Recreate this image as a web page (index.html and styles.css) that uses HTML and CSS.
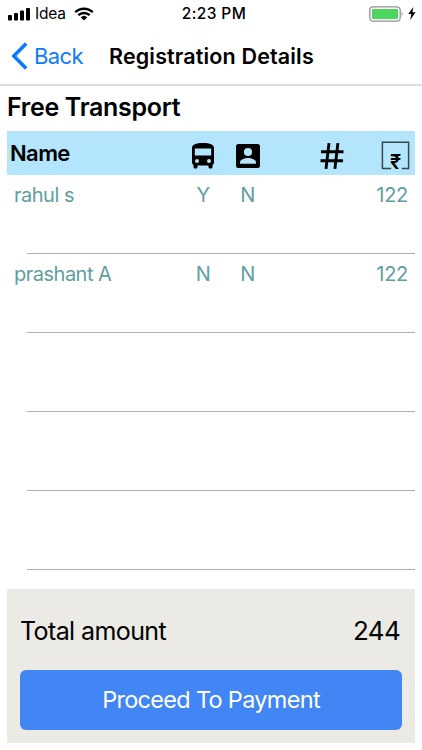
FILE: index.html
```html
<!DOCTYPE html>
<html lang="en">
<head>
    <meta charset="UTF-8">
    <meta name="viewport" content="width=device-width, initial-scale=1.0">
    <title>Registration Details</title>
    <link rel="stylesheet" href="styles.css">
</head>
<body>
    <div class="status-bar">
        <div class="carrier">
            <svg class="signal" width="23" height="14" viewBox="0 0 23 14">
                <rect x="0" y="8" width="4" height="5.5" rx="1"/>
                <rect x="6" y="6" width="4" height="7.5" rx="1"/>
                <rect x="12" y="3.5" width="4" height="10" rx="1"/>
                <rect x="18" y="1" width="4" height="12.5" rx="1"/>
            </svg>
            <span class="carrier-name">Idea</span>
            <svg class="wifi" width="20" height="14" viewBox="0 0 20 14">
                <path d="M1.3 5.2a12.6 12.6 0 0 1 17.4 0M4.3 8.2a8.3 8.3 0 0 1 11.4 0" fill="none" stroke="#000" stroke-width="2.5"/>
                <path d="M6.7 10.2a4.8 4.8 0 0 1 6.6 0L10 13.5z"/>
            </svg>
        </div>
        <span class="time">2:23 PM</span>
        <div class="power">
            <svg width="35" height="16" viewBox="0 0 35 16">
                <rect x=".8" y=".8" width="30.4" height="14.4" rx="3.5" fill="#fff" stroke="#929292" stroke-width="1.3"/>
                <rect x="3" y="3" width="26" height="10" rx="1" fill="#4cd55f"/>
                <path d="M32.7 5.6q1.8 2.4 0 4.8z" fill="#888"/>
            </svg>
            <svg class="bolt" width="8" height="13" viewBox="0 0 8 13">
                <path d="M5.4 0L.3 7h3L2.2 13l5.4-7.8H4.4z"/>
            </svg>
        </div>
    </div>

    <div class="navbar">
        <a class="back" href="#">
            <svg width="17" height="28" viewBox="0 0 17 28">
                <path d="M15.2 1.6L2.9 14l12.3 12.4" fill="none" stroke="#087bff" stroke-width="3.6"/>
            </svg>
            <span>Back</span>
        </a>
        <h1>Registration Details</h1>
    </div>

    <div class="content">
        <h2>Free Transport</h2>
        <div class="table-head">
            <span class="head-name">Name</span>
            <svg class="icon bus" width="22" height="26" viewBox="0 0 22 26">
                <path fill-rule="evenodd" d="M0 5C0 1.5 4 0 11 0s11 1.5 11 5v14.5q0 1.5-1.5 2.5v2q0 1.5-1.5 1.5h-1q-1.5 0-1.5-1.5v-1.5h-11V24q0 1.5-1.5 1.5H3Q1.5 25.5 1.5 24v-2Q0 21 0 19.5zM2.8 5.5v7h16.4v-7zM5 16a2 2 0 1 0 0 4 2 2 0 0 0 0-4zM17 16a2 2 0 1 0 0 4 2 2 0 0 0 0-4z"/>
            </svg>
            <svg class="icon person" width="24" height="24" viewBox="0 0 24 24">
                <rect width="24" height="24" rx="2.5"/>
                <circle cx="12" cy="8" r="4.1" fill="#b3e5fc"/>
                <path d="M4 19.8v-1.5c0-2.7 4.7-4.300 8-4.300s8 1.600 8 4.300v1.500z" fill="#b3e5fc"/>
            </svg>
            <svg class="icon hash" width="24" height="26" viewBox="0 0 24 26">
                <path d="M9 .2L6 25.8M17.9.2l-3 25.6M1 8.7h22.5M.5 17.8H23" fill="none" stroke="#000" stroke-width="2.9"/>
            </svg>
            <svg class="icon rupee" width="29" height="33" viewBox="0 0 29 33">
                <path d="M10.200 27.600H1.400V1.200h26.200v26.400h-6.800" fill="none" stroke="#37474f" stroke-width="1.500"/>
                <text class="rupee-sign" x="14.500" y="27.500" text-anchor="middle">₹</text>
            </svg>
        </div>
        <div class="row">
            <span class="name">rahul s</span>
            <span class="bus-value">Y</span>
            <span class="person-value">N</span>
            <span class="amount">122</span>
        </div>
        <div class="row">
            <span class="name">prashant A</span>
            <span class="bus-value">N</span>
            <span class="person-value">N</span>
            <span class="amount">122</span>
        </div>
        <div class="row"></div>
        <div class="row"></div>
        <div class="row"></div>

        <div class="payment">
            <div class="total">
                <span class="total-label">Total amount</span>
                <span class="total-value">244</span>
            </div>
            <button class="btn" type="button">Proceed To Payment</button>
        </div>
    </div>
</body>
</html>
```

FILE: styles.css
```css
* {
    margin: 0;
    padding: 0;
    box-sizing: border-box;
}

body {
    height: 750px;
    background: #fff;
    color: #000;
    font-family: Inter, sans-serif;
    overflow: hidden;
}

svg {
    display: block;
    flex-shrink: 0;
    overflow: visible;
}

.status-bar {
    display: grid;
    grid-template-columns: 1fr auto 1fr;
    align-items: center;
    height: 27px;
    padding: 0 6px 0 8px;
}

.carrier {
    display: flex;
    align-items: center;
}

.carrier-name {
    margin-left: 4px;
    width: 31px;
    font-size: 15.5px;
    letter-spacing: -0.2px;
    line-height: 20px;
}

.wifi {
    margin-left: 8px;
}

.time {
    padding-left: 4px;
    font-size: 15.5px;
    font-weight: 500;
    letter-spacing: 0.4px;
    line-height: 20px;
}

.power {
    display: flex;
    justify-content: flex-end;
    align-items: center;
    gap: 4px;
}

.navbar {
    display: flex;
    align-items: center;
    height: 59px;
    padding-left: 11px;
    border-bottom: 2px solid #dcdcdc;
}

.back {
    display: flex;
    align-items: center;
    width: 98px;
    color: #087bff;
    font-size: 22px;
    letter-spacing: -0.6px;
    text-decoration: none;
}

.back span {
    margin-left: 6px;
}

.navbar h1 {
    font-size: 21.5px;
    font-weight: 600;
    letter-spacing: 0.15px;
    white-space: nowrap;
}

.content {
    padding: 0 7px;
}

h2 {
    height: 45px;
    font-size: 25px;
    font-weight: 600;
    letter-spacing: -0.3px;
    line-height: 43px;
}

.table-head {
    display: flex;
    height: 43.5px;
    padding-left: 3px;
    background: #b3e5fc;
}

.head-name {
    width: 182px;
    font-size: 22px;
    font-weight: 600;
    letter-spacing: -0.6px;
    line-height: 45px;
}

.bus {
    margin-top: 12px;
}

.person {
    margin: 13px 0 0 22px;
}

.hash {
    margin: 12px 0 0 60px;
}

.rupee {
    margin: 10px 0 0 37px;
}

.rupee-sign {
    font-size: 20px;
    font-weight: 600;
}

.row {
    display: grid;
    grid-template-columns: 166px 46px 43px 1fr;
    height: 79.2px;
    padding: 7.5px 7px 0 7px;
    color: #5f9ea0;
    font-size: 20px;
    letter-spacing: -0.5px;
    line-height: 26px;
    background: linear-gradient(#b0b0b0, #b0b0b0) 20px 100% / 100% 1px no-repeat;
}

.bus-value,
.person-value {
    text-align: center;
}

.amount {
    letter-spacing: -0.3px;
    text-align: right;
}

.payment {
    height: 154px;
    margin-top: 18.5px;
    padding: 21px 13px 0;
    background: #ebeae4;
}

.total {
    display: flex;
    justify-content: space-between;
    height: 60px;
    padding: 0 2px 0 0;
    line-height: 42px;
}

.total-label {
    font-size: 25px;
    letter-spacing: -0.6px;
}

.total-value {
    font-size: 26px;
    letter-spacing: -0.7px;
}

.btn {
    width: 100%;
    height: 60px;
    border: none;
    border-radius: 6px;
    background: #4285f4;
    color: #fff;
    font-family: inherit;
    font-size: 23.5px;
    letter-spacing: -0.7px;
    cursor: pointer;
}
```
